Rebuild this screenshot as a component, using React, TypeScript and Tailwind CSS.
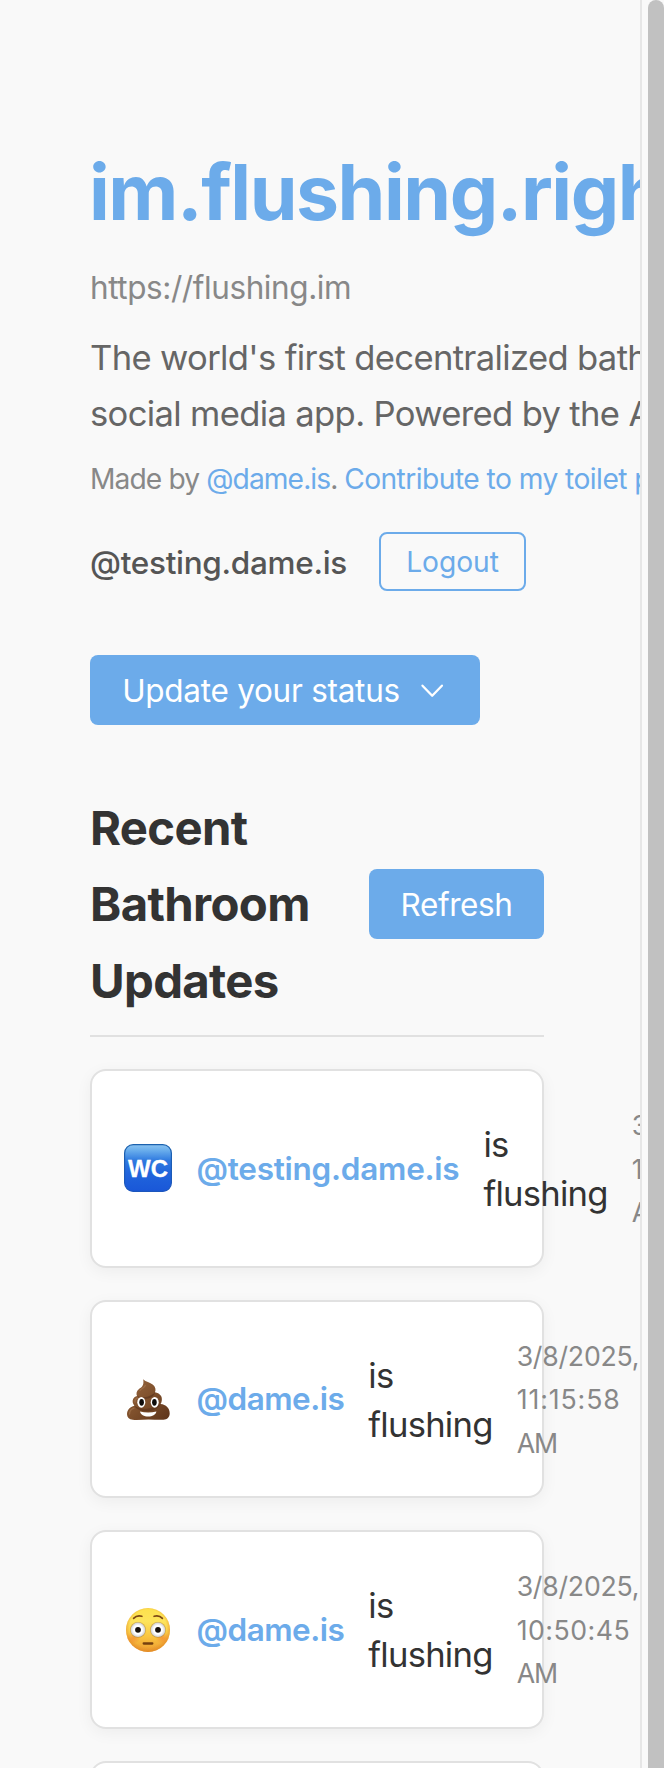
import React from "react";

function WcIcon() {
  return (
    <svg viewBox="0 0 48 48" className="-mt-px size-12 shrink-0">
      <defs>
        <linearGradient id="wc-fill" x1="0" y1="0" x2="0" y2="1">
          <stop offset="0" stopColor="#8cc4f2" />
          <stop offset="0.12" stopColor="#6aaeec" />
          <stop offset="0.34" stopColor="#2f7ae0" />
          <stop offset="0.6" stopColor="#2165dc" />
          <stop offset="1" stopColor="#1957d8" />
        </linearGradient>
        <linearGradient id="wc-edge" x1="0" y1="0" x2="0" y2="1">
          <stop offset="0" stopColor="#1c62ae" />
          <stop offset="1" stopColor="#1c56bd" />
        </linearGradient>
      </defs>
      <rect x="0.6" y="0.6" width="46.8" height="46.8" rx="8.6" fill="url(#wc-fill)" stroke="url(#wc-edge)" strokeWidth="1.2" />
      <text
        x="24"
        y="33"
        textAnchor="middle"
        textLength="40"
        lengthAdjust="spacingAndGlyphs"
        fill="#fff"
        stroke="#fff"
        strokeWidth="0.3"
        className="font-['Liberation_Sans',sans-serif] text-[24px] font-bold"
      >
        WC
      </text>
    </svg>
  );
}

function PoopIcon() {
  return (
    <svg viewBox="0 0 48 48" className="mt-px size-12 shrink-0">
      <defs>
        <linearGradient id="poop-fill" x1="0" y1="0" x2="1" y2="1">
          <stop offset="0" stopColor="#9a6a42" />
          <stop offset="0.5" stopColor="#7e4f2b" />
          <stop offset="1" stopColor="#5c331a" />
        </linearGradient>
      </defs>
      <path
        d="M19.2 4.2c2.500 2.600 6.800 3.200 9.800 5.600 2.600 2.200 3 5 2 7.400 4.800 1 7.600 4 6.800 8.300-.1 1.400-.6 2.600-1.300 3.600 5.600.4 9.200 4.500 9.200 9.100 0 4-2.700 6.300-6.200 6.500-4.700.3-9.500-.2-15-.2-5.400 0-10.500.9-15.700.3C5 44.400 3 42.400 3 39.300c0-4.500 2.900-7.500 7.400-8.600-1.700-2-2.300-4.500-1.300-6.700.8-1.600 2.200-2.500 3.900-3-1.100-2.600-.4-5.400 2-7.100 2.400-1.700 5.300-2.900 4.200-9.700z"
        fill="url(#poop-fill)"
      />
      <path d="M13 21c3 1.500 7.200 1.600 11 .4 3.300-1 5.800-2.600 7-4.200-.4 3.400-3.800 5.800-8.300 6.600-4.200.7-8.200-.3-9.700-2.800z" fill="#56301a" opacity="0.6" />
      <path d="M10.400 30.700c5.600 4.200 19.600 4.200 26.100-1.600-1.500 4.600-7.500 7.100-14 7.100-5.700 0-10.500-2-12.100-5.500z" fill="#56301a" opacity="0.6" />
      <path d="M16 15.500c1.300-2.300 4.300-2.500 5.300-5M11 27c-.3-2 .7-3.500 2.500-4.200M5.500 39c.2-3.200 1.800-5 4.500-5.800" fill="none" stroke="#b0805a" strokeWidth="1.3" strokeLinecap="round" opacity="0.5" />
      <ellipse cx="17.3" cy="27.300" rx="4" ry="5.400" fill="#fff" />
      <ellipse cx="30.700" cy="27.300" rx="4" ry="5.400" fill="#fff" />
      <ellipse cx="17.600" cy="27.300" rx="2.300" ry="3.400" fill="#0d0b0a" />
      <ellipse cx="30.400" cy="27.300" rx="2.300" ry="3.400" fill="#0d0b0a" />
      <path d="M16 36.500c5 1.300 11.200 1.300 16.400 0-.7 3.200-4 5-8.200 5s-7.500-1.800-8.200-5z" fill="#fff" />
    </svg>
  );
}

function FlushedIcon() {
  return (
    <svg viewBox="0 0 48 48" className="mt-0.5 size-12 shrink-0">
      <defs>
        <linearGradient id="face-fill" x1="0" y1="0" x2="0" y2="1">
          <stop offset="0" stopColor="#fde14c" />
          <stop offset="0.3" stopColor="#fde45c" />
          <stop offset="0.65" stopColor="#fac541" />
          <stop offset="1" stopColor="#eb9a2f" />
        </linearGradient>
        <radialGradient id="face-rim" cx="0.5" cy="0.46" r="0.54">
          <stop offset="0.78" stopColor="#e8912a" stopOpacity="0" />
          <stop offset="1" stopColor="#df8522" stopOpacity="0.75" />
        </radialGradient>
        <radialGradient id="cheek">
          <stop offset="0" stopColor="#f0652c" stopOpacity="0.45" />
          <stop offset="1" stopColor="#f0652c" stopOpacity="0" />
        </radialGradient>
        <radialGradient id="eye">
          <stop offset="0.6" stopColor="#fff" />
          <stop offset="1" stopColor="#cfcfd2" />
        </radialGradient>
      </defs>
      <circle cx="24" cy="24" r="22" fill="url(#face-fill)" />
      <circle cx="24" cy="24" r="22" fill="url(#face-rim)" />
      <ellipse cx="9.500" cy="32" rx="7" ry="6" fill="url(#cheek)" />
      <ellipse cx="38.500" cy="32" rx="7" ry="6" fill="url(#cheek)" />
      <circle cx="14" cy="23.800" r="7.900" fill="#a8803c" opacity="0.6" />
      <circle cx="34" cy="23.800" r="7.900" fill="#a8803c" opacity="0.6" />
      <circle cx="14" cy="23.800" r="7.300" fill="url(#eye)" />
      <circle cx="34" cy="23.800" r="7.300" fill="url(#eye)" />
      <circle cx="14" cy="23.800" r="2.900" fill="#17110d" />
      <circle cx="34" cy="23.800" r="2.900" fill="#17110d" />
      <path d="M9.600 12.400c2-2.200 5-3 8.300-2.100M38.400 12.400c-2-2.200-5-3-8.300-2.100" fill="none" stroke="#7d4714" strokeWidth="1.700" strokeLinecap="round" />
      <path d="M19.700 37.500h8.600" stroke="#75400f" strokeWidth="2.300" strokeLinecap="round" />
    </svg>
  );
}

type Update = {
  icon: React.ReactNode;
  handle: string;
  tracking: string;
  time: string;
  timeTracking: string;
};

const updates: Update[] = [
  { icon: <WcIcon />, handle: "@testing.dame.is", tracking: "tracking-[-0.250px]", time: "11:20:31", timeTracking: "tracking-[0.9px]" },
  { icon: <PoopIcon />, handle: "@dame.is", tracking: "tracking-[-0.500px]", time: "11:15:58", timeTracking: "tracking-[0.9px]" },
  { icon: <FlushedIcon />, handle: "@dame.is", tracking: "tracking-[-0.500px]", time: "10:50:45", timeTracking: "tracking-[0.5px]" },
];

function UpdateCard({ icon, handle, tracking, time, timeTracking }: Update) {
  return (
    <li className="flex h-[198.560px] items-center gap-6 rounded-2xl border-2 border-[#e1e1e1] bg-white px-8 whitespace-nowrap shadow-[0_4px_16px_rgba(0,0,0,0.05)]">
      {icon}
      <a className={`shrink-0 pl-[0.500px] text-[31.500px] font-semibold text-[#6cabea] ${tracking}`}>{handle}</a>
      <p className="shrink-0 pt-0.5 text-[34.600px] leading-[49.280px] tracking-[-0.750px] text-[#333]">
        is
        <br />
        flushing
      </p>
      <p className="shrink-0 pt-0.5 text-[26.700px] leading-[43.520px] text-[#888]">
        <span className="tracking-[-0.250px]">3/8/2025,</span>
        <br />
        <span className={timeTracking}>{time}</span>
        <br />
        <span className="tracking-[-1px]">AM</span>
      </p>
    </li>
  );
}

export default function App() {
  return (
    <div className="flex h-[1768px] w-[664px] justify-between overflow-hidden bg-[#f9f9f9] font-['Inter','Liberation_Sans',sans-serif]">
      <main className="w-[642px] overflow-hidden border-r-2 border-[#e6e6e6] pl-[90px]">
        <header className="pt-[147px] whitespace-nowrap">
          <h1 className="-ml-px text-[76.800px] leading-[92px] font-bold tracking-[-1.450px] text-[#6cabea]">im.flushing.right.now</h1>
          <p className="mt-[23px] text-[31.500px] leading-[51px] tracking-[-0.420px] text-[#888]">https://flushing.im</p>
          <p className="mt-4 text-[34.600px] leading-[56.300px] tracking-[-0.650px] text-[#666]">
            The world's first decentralized bathroom
            <br />
            social media app. Powered by the AT Protocol.
          </p>
          <p className="mt-3.5 text-[28.200px] leading-[46px] tracking-[-0.600px] text-[#888]">
            <span className="tracking-[-0.900px]">Made by </span>
            <a className="tracking-[-0.900px] text-[#6cabea]">@dame.is</a>
            <span className="tracking-[-1.100px]">. </span>
            <a className="tracking-[-0.550px] text-[#6cabea]">Contribute to my toilet paper fund</a>
          </p>
        </header>

        <div className="mt-[30px] flex items-center gap-8">
          <span className="w-[257px] pt-1 text-[31.500px] font-medium tracking-[-0.300px] whitespace-nowrap text-[#555]">@testing.dame.is</span>
          <button className="flex h-[59px] w-[147px] items-center justify-center rounded-lg border-2 border-[#6cabea] pt-[3px] text-[28.200px] tracking-[-0.050px] text-[#6cabea]">
            Logout
          </button>
        </div>

        <button className="mt-16 flex h-[70px] w-[390px] items-center rounded-lg bg-[#6cabea] pl-8 text-[31.500px] tracking-[-0.270px] text-white">
          <span className="w-[278px] pt-0.5 whitespace-nowrap">Update your status</span>
          <svg viewBox="0 0 24 24" className="ml-5 size-6" fill="none" stroke="currentColor" strokeWidth="2.300" strokeLinecap="round" strokeLinejoin="round">
            <path d="M2.500 7.700l9.700 10 9.700-10" />
          </svg>
        </button>

        <section className="mt-[65px] w-[454px]">
          <div className="flex items-center justify-between border-b-2 border-[#e1e1e1] pb-[15px]">
            <h2 className="text-[47.300px] leading-[76.800px] font-bold tracking-[-0.650px] text-[#333]">
              Recent
              <br />
              Bathroom
              <br />
              Updates
            </h2>
            <button className="mb-0.5 flex h-[70px] w-[175px] items-center justify-center rounded-lg bg-[#6cabea] pt-0.5 text-[31.500px] tracking-[-0.400px] text-white">
              Refresh
            </button>
          </div>
          <ul className="mt-8 flex flex-col gap-8">
            {updates.map((u, i) => (
              <UpdateCard key={i} {...u} />
            ))}
            <li className="h-[198.560px] shrink-0 rounded-2xl border-2 border-[#e1e1e1] bg-white" />
          </ul>
        </section>
      </main>
      <div className="w-4 rounded-t-full bg-[#c1c1c1]" />
    </div>
  );
}
